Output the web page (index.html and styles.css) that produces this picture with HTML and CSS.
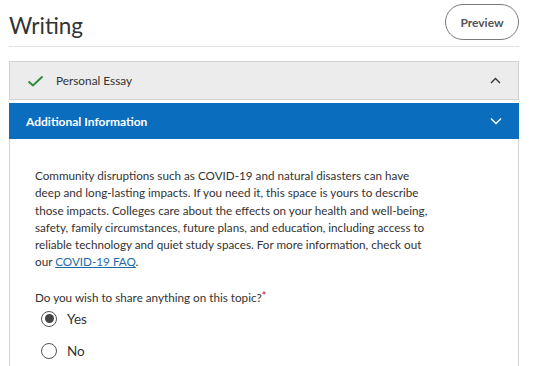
FILE: index.html
```html
<!DOCTYPE html>
<html lang="en">
<head>
  <meta charset="UTF-8" />
  <title>Writing</title>
  <meta name="viewport" content="width=device-width, initial-scale=1" />
  <link rel="stylesheet" href="styles.css">
</head>
<body>
  <div class="page">
    <div class="page-head">
      <h1>Writing</h1>
      <button type="button" class="preview-btn">Preview</button>
    </div>

    <div class="accordion">
      <div class="acc-item done">
        <div class="acc-head">
          <svg class="check" width="17" height="12" viewBox="0 0 17 12">
            <polyline points="1.5,6.5 6,10.5 15.5,1.5" fill="none" stroke="#2e8b3e" stroke-width="2"/>
          </svg>
          <span class="acc-title">Personal Essay</span>
          <svg class="caret" width="11" height="7" viewBox="0 0 11 7">
            <polyline points="1,6 5.5,1.5 10,6" fill="none" stroke="#333" stroke-width="1.4"/>
          </svg>
        </div>
      </div>

      <div class="acc-item open">
        <div class="acc-head">
          <span class="acc-title">Additional Information</span>
          <svg class="caret" width="12" height="8" viewBox="0 0 12 8">
            <polyline points="1,1.5 6,6.5 11,1.5" fill="none" stroke="#fff" stroke-width="1.4"/>
          </svg>
        </div>
        <div class="acc-body">
          <p class="intro">Community disruptions such as COVID-19 and natural disasters can have<br>
            deep and long-lasting impacts. If you need it, this space is yours to describe<br>
            those impacts. Colleges care about the effects on your health and well-being,<br>
            safety, family circumstances, future plans, and education, including access to<br>
            reliable technology and quiet study spaces. For more information, check out<br>
            our <a href="#">COVID-19 FAQ</a>.</p>

          <p class="question">Do you wish to share anything on this topic?<span class="req">*</span></p>
          <label class="radio"><input type="radio" name="share" value="yes" checked><span class="dot"></span>Yes</label>
          <label class="radio"><input type="radio" name="share" value="no"><span class="dot"></span>No</label>
        </div>
      </div>
    </div>
  </div>
</body>
</html>
```

FILE: styles.css
```css
body {
  margin: 0;
  font-family: Lato, sans-serif;
  color: #333;
  background: white;
}
.page {
  width: 510px;
  margin-left: 9px;
}
.page-head {
  display: flex;
  justify-content: space-between;
  align-items: flex-start;
  height: 46px;
  border-bottom: 1px solid #e4e4e4;
}
h1 {
  margin: 12px 0 0;
  font-size: 22.5px;
  font-weight: 400;
  color: #333;
}
.preview-btn {
  margin-top: 4px;
  width: 74px;
  height: 36px;
  border: 1px solid #7a7a7a;
  border-radius: 18px;
  background: white;
  color: #555;
  font-family: Lato, sans-serif;
  font-size: 12px;
  font-weight: bold;
  cursor: pointer;
}
.accordion {
  margin-top: 14px;
}
.acc-head {
  display: flex;
  align-items: center;
  height: 37px;
  padding: 0 17px 0 17px;
  font-size: 11.8px;
}
.acc-title {
  flex: 1;
}
.done {
  border: 1px solid #d2d2d2;
  background: #ececec;
}
.done .check {
  margin-right: 12px;
}
.open {
  margin-top: 3px;
}
.open .acc-head {
  height: 36px;
  background: #0b6dbd;
  color: white;
  font-weight: bold;
  font-size: 12px;
  padding-right: 17px;
}
.acc-body {
  border: 1px solid #d6d6d6;
  border-top: none;
  padding: 28px 25px 60px;
  font-size: 11.7px;
}
.intro {
  margin: 0;
  line-height: 17.3px;
}
.intro a {
  color: #1f6aa5;
}
.question {
  margin: 19px 0 0;
  line-height: 12px;
}
.req {
  color: #d0021b;
  font-size: 11px;
  vertical-align: 2px;
}
.radio {
  display: flex;
  align-items: center;
  height: 32px;
  padding-left: 6px;
  font-size: 13.5px;
}
.radio input {
  display: none;
}
.dot {
  width: 16px;
  height: 16px;
  margin-right: 10px;
  border: 1px solid #555;
  border-radius: 50%;
  box-sizing: border-box;
  display: flex;
  align-items: center;
  justify-content: center;
}
.radio input:checked + .dot::after {
  content: '';
  width: 9px;
  height: 9px;
  border-radius: 50%;
  background: #444;
}
```
